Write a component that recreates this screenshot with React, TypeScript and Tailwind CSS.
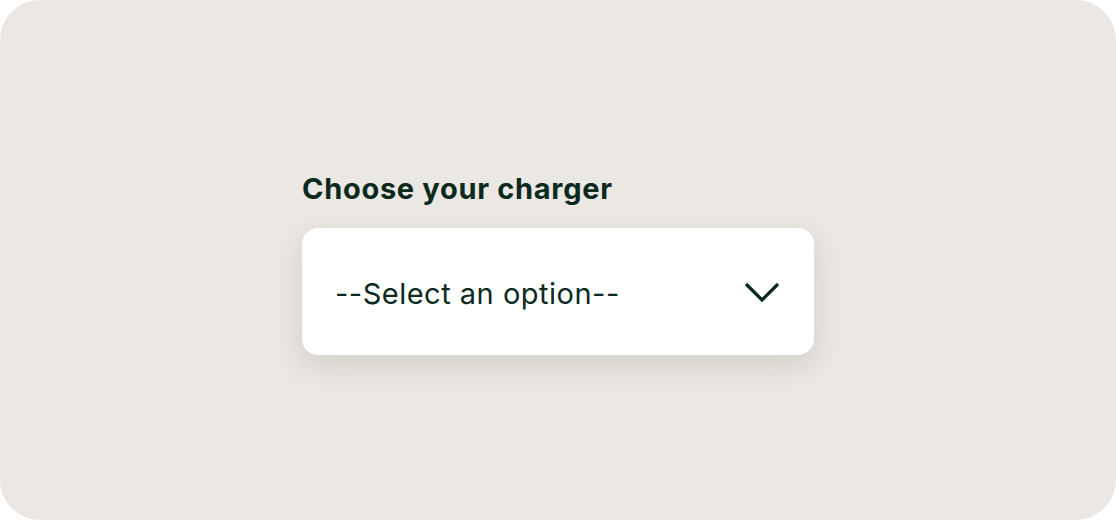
export default function App() {
  return (
    <div className="w-[1116px] h-[520px] bg-white">
      <div
        className="w-full h-full rounded-[40px] bg-[#ebe7e2] flex flex-col items-start pl-[302px] pt-[170px]"
        style={{ fontFamily: '"Inter", "Noto Sans", sans-serif' }}
      >
        <label className="text-[29px] leading-[38px] font-bold text-[#0b2a1e] tracking-[0.7px]">
          Choose your charger
        </label>
        <div className="mt-[20px] w-[512px] h-[127px] bg-white rounded-[16px] shadow-[0_10px_30px_rgba(60,50,40,0.14)] flex items-center justify-between pl-[33px] pr-[34px]">
          <span className="text-[29px] text-[#0b2a1e] tracking-[0.5px] pt-[5px]">--Select an option--</span>
          <svg width="36" height="20" viewBox="0 0 36 20" fill="none">
            <path d="M2 2 L18 18 L34 2" stroke="#0b2a1e" strokeWidth="3.2" />
          </svg>
        </div>
      </div>
    </div>
  );
}
